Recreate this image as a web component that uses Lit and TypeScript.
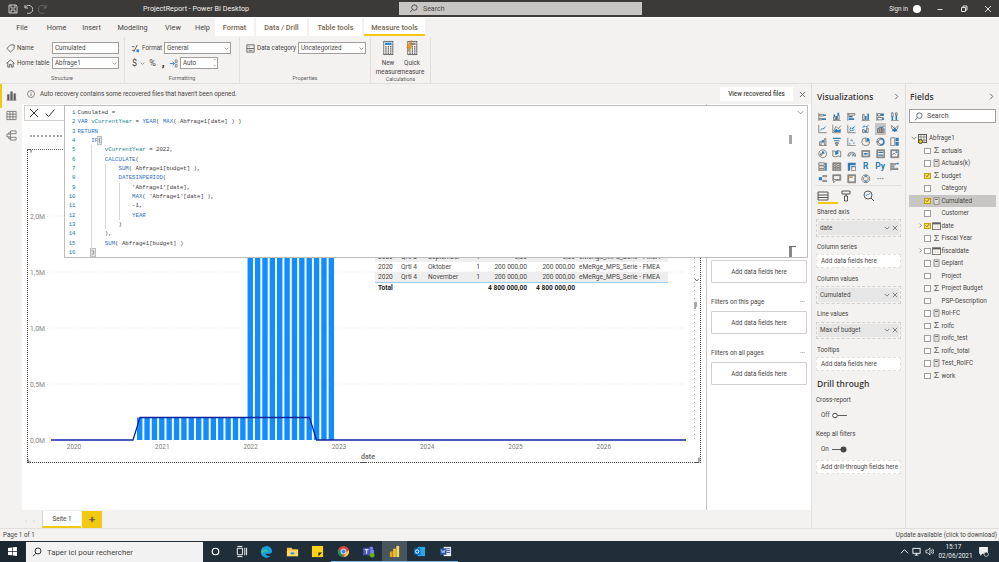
import { LitElement, css, html, svg } from 'lit';
import { customElement } from 'lit/decorators.js';

const CODE = [
  'Cumulated =',
  'VAR vCurrentYear = YEAR( MAX( Abfrage1[date] ) )',
  'RETURN',
  '    IF(',
  '        vCurrentYear = 2022,',
  '        CALCULATE(',
  "            SUM( Abfrage1[budget] ),",
  '            DATESINPERIOD(',
  "                'Abfrage1'[date],",
  "                MAX( 'Abfrage1'[date] ),",
  '                -1,',
  '                YEAR',
  '            )',
  '        ),',
  '        SUM( Abfrage1[budget] )',
  '    )',
];

// which indent guides (in 4-char units) each code line draws
const GUIDES = [0, 0, 0, 0, 1, 1, 2, 2, 3, 3, 3, 3, 2, 1, 1, 1];

const FIELDS: { name: string; icon: string; checked?: boolean; active?: boolean; expand?: boolean }[] = [
  { name: 'actuals', icon: 'sum' },
  { name: 'Actuals(k)', icon: 'calc' },
  { name: 'budget', icon: 'sum', checked: true },
  { name: 'Category', icon: '' },
  { name: 'Cumulated', icon: 'calc', checked: true, active: true },
  { name: 'Customer', icon: '' },
  { name: 'date', icon: 'cal', checked: true, expand: true },
  { name: 'Fiscal Year', icon: 'sum' },
  { name: 'fiscaldate', icon: 'cal', expand: true },
  { name: 'Geplant', icon: 'calc' },
  { name: 'Project', icon: '' },
  { name: 'Project Budget', icon: 'sum' },
  { name: 'PSP-Description', icon: '' },
  { name: 'RoI-FC', icon: 'calc' },
  { name: 'rolfc', icon: 'sum' },
  { name: 'rolfc_test', icon: 'calc' },
  { name: 'rolfc_total', icon: 'sum' },
  { name: 'Test_RoIFC', icon: 'calc' },
  { name: 'work', icon: 'sum' },
];

const ROWS = [
  ['2020', 'Qrtl 3', 'September', '1', '0,00', '0,00', 'eMeRge_MPS_Serie - FMEA'],
  ['2020', 'Qrtl 4', 'Oktober', '1', '200 000,00', '200 000,00', 'eMeRge_MPS_Serie - FMEA'],
  ['2020', 'Qrtl 4', 'November', '1', '200 000,00', '200 000,00', 'eMeRge_MPS_Serie - FMEA'],
];

// [gray path, blue path] on a 12x12 box
const VIZ: [string, string][] = [
  ['M1 1v10M2 3h5v2H2zM2 8h3v2H2z', 'M7 3h3v2H7zM5 8h5v2H5z'],
  ['M1 11h10M2 6h2v4H2zM7 4h2v6H7z', 'M2 3h2v3H2zM7 1h2v3H7zM4.500 5h2v5h-2z'],
  ['M1 1v10M2 2h8v2H2z', 'M2 5h5v2H2zM2 8h7v2H2z'],
  ['M1 11h10M2 3h2v7H2z', 'M5 5h2v5H5zM8 2h2v8H8z'],
  ['M1 1v10M2 2h4v3H2zM2 7h6v3H2z', 'M6 2h4v3H6zM8 7h2v3H8z'],
  ['M1 11h10M2 1h2v5H2zM7 1h2v3H7z', 'M2 6h2v4H2zM7 4h2v6H7z'],
  ['M1 1v10h10', 'M2 9l3-4 2 2 4-5'],
  ['M1 1v10h10M2 9l3-6 3 3 3-4', 'M2 10l3-4 3 2 3-2v4z'],
  ['M1 1v10h10', 'M2 8l3-4 2 3 4-5M2 10l3-3 2 2 4-3'],
  ['M2 7h2v4H2zM7 5h2v6H7z', 'M1 5l3-3 3 2 4-3M4.500 8h2v3h-2z'],
  ['M2 6h2v5H2zM5 4h2v7H5zM8 6h2v5H8z', 'M1 7l3-3 3 2 4-4'],
  ['M2 2l4 4 4-4v3l-4 5-4-5z', 'M2 9l4-5 4 5'],
  ['M1 11h10M2 6h2v4H2zM8 2h2v8H8z', 'M4.500 4h3v3h-3z'],
  ['M4 7h4v1.500H4zM5 9.500h2V11H5z', 'M1 1h10v1.500H1zM2.500 4h7v1.500h-7z'],
  ['M1 1v10h10', 'M3 8h1.500v1.500H3zM6 4h1.500v1.500H6zM8 7h1.500v1.500H8zM4.500 3H6v1.500H4.500z'],
  ['M6 1a5 5 0 1 0 5 5H6z', 'M7 1v4h4a4 4 0 0 0-4-4z'],
  ['M6 1a5 5 0 0 0-5 5h2a3 3 0 0 1 3-3zM1 6a5 5 0 0 0 5 5V9a3 3 0 0 1-3-3z', 'M6 1a5 5 0 0 1 0 10V9a3 3 0 0 0 0-6z'],
  ['M1 1h5v10H1z', 'M7 1h4v4H7zM7 6h4v5H7z'],
  ['M6 1a5 5 0 1 0 .01 0zM3 6h2v2H3z', 'M5 3h3v3H5z'],
  ['M1 2l3 1 4-1 3 1v7l-3-1-4 1-3-1z', 'M4 3l4-1v4l-4 2z'],
  ['M1 9a5 5 0 0 1 10 0H9a3 3 0 0 0-6 0z', 'M6 9l3-4 .8.5L7 9.500z'],
  ['M1 2h10v8H1zM2 3v6h8V3z', 'M3.500 5h5v2h-5z'],
  ['M1 1h10v10H1zM2 2v8h8V2z', 'M3 3.500h6V5H3zM3 7h6v1.500H3z'],
  ['M1 1h10v10H1zM2 2v8h8V2zM3 8l2-3 2 2', 'M7 3h2v2H7z'],
  ['M1 1h7v3H1zM1 5h7v3H1zM1 9h7v2H1z', 'M9 1h2v10H9z'],
  ['M1 1h10v10H1zM2 2v2h3V2zM6 2v2h4V2zM2 5v2h3V5zM6 5v2h4V5zM2 8v2h3V8zM6 8v2h4V8z', ''],
  ['M6 6h5v5H6z', 'M1 1h10v3H1zM1 4h3v7H1zM5 5h6v1H5z'],
  ['', ''],
  ['', ''],
  ['M1 1v10M2 2h5v1.500H2zM2 5h3v1.500H2zM2 8h8v1.500H2z', 'M8 1h3v2H8z'],
  ['M6 2h5v1.500H6zM6 8h5v1.500H6z', 'M1 4h4v4H1z'],
  ['M1 1h10v7H5l-3 3V8H1zM2 2v5h8V2z', ''],
  ['M1 1h10v10H1zM2 2v8h8V2z', 'M3 3h4v2H3z'],
  ['M6 1a5 5 0 1 0 .01 0zM6 3a3 3 0 1 0 .01 0z', 'M4 1.500L6 4 8 1.500M4 10.500L6 8l2 2.500'],
  ['', ''],
];

const vizIcon = (icon: [string, string], index: number) => {
  if (index === 27) return html`<span class="viz-glyph r">R</span>`;
  if (index === 28) return html`<span class="viz-glyph py">Py</span>`;
  if (index === 34) return html`<span class="viz-glyph dots">···</span>`;
  const blue = index === 32 ? '#d9822b' : '#2b7cb8';
  return html`<svg class=${index === 10 ? 'viz selected' : 'viz'} viewBox="0 0 12 12">
    <path d=${icon[0]} fill="none" stroke="#605e5c" stroke-width=".9"></path>
    <path d=${icon[1]} fill=${blue}></path>
  </svg>`;
};

const calculator = (big: boolean, bolt = false) => html`<svg class=${big ? 'calc-big' : 'calc-small'} viewBox="0 0 20 24">
  <rect x="3" y="1" width="15" height="22" fill="#fff" stroke="#605e5c" stroke-width="1.500"></rect>
  <rect x="5" y="3" width="11" height="4" fill=${bolt ? '#8a8886' : '#2b88d8'}></rect>
  ${[9, 12.5, 16, 19.500].map(y => [5.500, 9.500, 13.500].map(x => svg`<rect x=${x} y=${y} width="2.200" height="2.200" fill="#484644"></rect>`))}
  ${bolt ? svg`<path d="M8 0L1 11h4l-3 8 9-11H7l3-8z" fill="#e8a317" stroke="#c55a11" stroke-width=".6"></path>` : ''}
</svg>`;

const fieldIcon = (icon: string) => {
  if (icon === 'sum') return html`<span class="sigma">Σ</span>`;
  if (icon === 'calc') return html`<svg class="ficon" viewBox="0 0 10 10">
    <rect x="1.500" y=".5" width="7" height="9" fill="#fff" stroke="#605e5c"></rect>
    <rect x="3" y="2" width="4" height="1.500" fill="#605e5c"></rect>
    <path d="M3 5h4M3 7h4" stroke="#a19f9d" stroke-width=".8"></path>
  </svg>`;
  if (icon === 'cal') return html`<svg class="ficon wide" viewBox="0 0 11 10">
    <rect x=".5" y="1" width="10" height="8.500" fill="#fff" stroke="#605e5c"></rect>
    <rect x=".5" y="1" width="10" height="2" fill="#605e5c"></rect>
    <path d="M2 5h7M2 7h7" stroke="#a19f9d" stroke-width=".8" stroke-dasharray="1 1"></path>
  </svg>`;
  return html`<span class="ficon"></span>`;
};

const close = html`<svg class="mini" viewBox="0 0 8 8"><path d="M1 1l6 6M7 1L1 7" stroke="#605e5c" fill="none"></path></svg>`;
const chevDown = html`<svg class="mini" viewBox="0 0 8 8"><path d="M1 2.500l3 3 3-3" stroke="#605e5c" fill="none"></path></svg>`;
const chevRight = html`<svg class="mini" viewBox="0 0 8 8"><path d="M2.500 1l3 3-3 3" stroke="#605e5c" fill="none"></path></svg>`;
const magnifier = (color: string) => html`<svg class="magnifier" viewBox="0 0 10 10"><circle cx="6" cy="4" r="3" fill="none" stroke=${color}></circle><path d="M4 6.200L1 9.200" stroke=${color}></path></svg>`;

@customElement('app-root')
export class AppRoot extends LitElement {
  static styles = css`
    :host {
      display: block;
      width: 999px;
      height: 562px;
      overflow: hidden;
      font-family: Roboto, "Open Sans", sans-serif;
      font-size: 6.300px;
      color: #484644;
      background: #f3f2f1;
      white-space: nowrap;
    }
    svg { display: block; flex: none; }
    .app { display: flex; flex-direction: column; height: 562px; }

    /* title bar */
    .title { height: 18px; background: #3b3a39; display: flex; align-items: center; color: #eee; flex: none; border-bottom: 1px solid #fff; box-sizing: border-box; }
    .qa { width: 143px; display: flex; gap: 5px; padding-left: 8px; box-sizing: border-box; }
    .qa svg { width: 10px; height: 10px; }
    .title-text { width: 256px; font-size: 7.200px; }
    .search { width: 243px; height: 13px; background: #c8c6c4; display: flex; align-items: center; gap: 5px; padding-left: 10px; box-sizing: border-box; color: #484644; font-size: 7px; }
    .magnifier { width: 9px; height: 9px; }
    .win { margin-left: auto; display: flex; align-items: center; }
    .sign { margin-right: 5px; }
    .dot { width: 8px; height: 8px; border-radius: 50%; background: #fff; margin-right: 15px; }
    .win svg { width: 8px; height: 8px; margin-right: 16px; }
    .win svg:last-child { margin-right: 7px; }

    /* ribbon */
    .tabs { height: 18px; display: flex; align-items: stretch; flex: none; font-size: 7.300px; padding-left: 5px; }
    .tab { display: flex; align-items: center; justify-content: center; }
    .tab.context { background: #fff; font-weight: 500; color: #75664b; margin-right: 2px; }
    .tab.active { box-shadow: inset 0 -2px 0 #f2c811; }
    .ribbon { height: 47px; display: flex; flex: none; border-bottom: 1px solid #e1dfdd; position: relative; }
    .group { display: flex; flex-direction: column; border-right: 1px solid #e1dfdd; margin: 1px 0 0; box-sizing: border-box; }
    .group-body { flex: 1; display: flex; flex-direction: column; gap: 3px; padding: 5px 0 0 6px; }
    .group-label { text-align: center; font-size: 5.400px; height: 7px; line-height: 7px; color: #605e5c; padding-bottom: 1px; }
    .g-row { display: flex; align-items: center; gap: 2px; height: 12px; }
    .g-row svg { width: 9px; height: 9px; }
    .inp { height: 12px; box-sizing: border-box; background: #fff; border: 1px solid #a19f9d; display: flex; align-items: center; justify-content: space-between; padding: 0 1px 0 2px; }
    .inp svg { width: 5px; height: 5px; }
    .lbl-name { width: 33px; }
    .lbl-format { width: 20px; }
    .lbl-cat { width: 38px; margin-right: 1px; }
    .w67 { width: 67px; }
    .w68 { width: 68px; }
    .w38 { width: 38px; }
    .stepper { font-size: 4px; line-height: 4px; white-space: normal; }
    .calc-big { width: 12px; height: 16px; }
    .calc-small { width: 9px; height: 11px; }
    .measures { display: flex; padding: 3px 0 0 5px; text-align: center; line-height: 8.600px; flex: 1; white-space: normal; }
    .measures div { width: 24px; display: flex; flex-direction: column; align-items: center; gap: 3px; }
    .glyphs { display: flex; align-items: center; font-size: 9px; height: 12px; padding-left: 1px; width: 46px; flex: none; }
    .glyphs span:nth-child(1) { width: 9px; }
    .glyphs .caret { width: 5px; height: 5px; margin-right: 4px; }
    .glyphs span:nth-child(3) { width: 14px; }
    .glyphs span:nth-child(4) { width: 8px; font-weight: 900; font-size: 11px; line-height: 6px; color: #323130; }

    /* main area */
    .main { flex: 1; min-height: 0; display: flex; }
    .rail { width: 22px; flex: none; display: flex; flex-direction: column; align-items: center; gap: 9px; padding-top: 6px; box-sizing: border-box; position: relative; }
    .rail::before { content: ''; position: absolute; left: 0; top: 0; width: 2px; height: 24px; background: #f2c811; }
    .rail svg { width: 11px; height: 11px; }
    .center { width: 789px; flex: none; display: flex; flex-direction: column; position: relative; background: #f3f2f1; }
    .info { height: 20px; flex: none; display: flex; align-items: center; padding-left: 5px; gap: 5px; }
    .info .i { width: 8px; height: 8px; }
    .view-btn { margin-left: auto; background: #fff; width: 73px; height: 14px; display: flex; align-items: center; justify-content: center; font-weight: 500; font-size: 6.300px; }
    .info .x { width: 7px; height: 7px; margin: 0 5px 0 1px; }
    .canvas { flex: 1; display: flex; min-height: 0; background: #fff; }
    .report { width: 684px; flex: none; position: relative; border-right: 1px solid #c8c6c4; }
    .filters { flex: 1; display: flex; flex-direction: column; justify-content: flex-end; padding: 0 4px 125px; }
    .f-label { display: flex; justify-content: space-between; height: 14px; line-height: 10px; margin-top: 14px; padding-right: 2px; }
    .f-box { height: 23px; box-sizing: border-box; border: 1px solid #d2d0ce; border-radius: 1px; display: flex; align-items: center; justify-content: center; }

    .stale { position: absolute; left: 8px; top: 31px; border-top: 2px dotted #a6a6a6; width: 32px; }
    .visual { position: absolute; left: 5px; top: 45px; width: 674px; height: 314px; box-sizing: border-box; border: 1px dotted #444; border-top-color: #666; }
    .visual svg { position: absolute; left: -1px; top: -1px; }
    .chart-table { position: absolute; left: 353px; top: 148px; width: 293px; table-layout: fixed; border-collapse: collapse; font-size: 6.600px; }
    .chart-table td { padding: 0 2px 0 3px; height: 10px; line-height: 10px; overflow: hidden; }
    .chart-table td.num { text-align: right; padding-right: 1px; }
    .chart-table td.qty { text-align: center; }
    .c1 { width: 23px; }
    .c2 { width: 27px; }
    .c3 { width: 45px; }
    .c4 { width: 15px; }
    .c5 { width: 43px; }
    .c6 { width: 48px; }
    .chart-table tr.shade td { background: #eeeeee; }
    .chart-table tr.last td { border-bottom: 1px solid #9fcdf0; }
    .chart-table tr.total td { font-weight: 700; color: #222; overflow: visible; }

    .commit { position: absolute; left: 2px; top: 21px; width: 41px; height: 16px; background: #fff; border: 1px solid #d2d0ce; box-sizing: border-box; display: flex; align-items: center; gap: 6px; padding-left: 4px; z-index: 2; }
    .commit svg { width: 10px; height: 10px; }
    .editor { position: absolute; left: 42px; top: 21px; width: 744px; height: 153px; background: #fff; border: 1px solid #bdbdbd; box-sizing: border-box; z-index: 2; font-family: "Liberation Mono", monospace; font-size: 5.700px; padding-top: 2px; }
    .line { display: flex; height: 9.330px; line-height: 9.330px; white-space: pre; position: relative; color: #3b3a39; }
    .ln { width: 10.500px; text-align: right; color: #237893; flex: none; margin-right: 1px; }
    .code { padding-left: 1px; position: relative; }
    .guide { position: absolute; top: 0; bottom: 0; width: 1px; background: #d8d8d8; }
    .kw { color: #2f6fc4; }
    .var { color: #12888a; }
    .match { background: #e4e4e4; outline: .5px solid #bdbdbd; }
    .sb-thumb { position: absolute; right: 15px; top: 29px; width: 3px; height: 9px; background: #a6a6a6; }
    .sb-end { position: absolute; right: 11px; top: 140px; width: 7px; height: 10px; border-top: 1px solid #666; background: linear-gradient(#888, #888) 0 0 / 3px 100% no-repeat; }
    .sb-chev { position: absolute; right: 3px; top: 3px; width: 7px; height: 7px; }

    .pages { height: 18px; flex: none; display: flex; align-items: flex-end; background: #f3f2f1; padding-left: 3px; }
    .arrows { display: flex; gap: 6px; color: #c8c6c4; font-size: 6px; padding: 0 0 5px 0; width: 17px; box-sizing: border-box; }
    .page { width: 39px; height: 17px; background: #fff; border-bottom: 2px solid #f2c811; box-sizing: border-box; display: flex; align-items: center; justify-content: center; border-left: 1px solid #d2d0ce; }
    .plus { width: 20px; height: 17px; background: #f2c811; color: #605e5c; margin-left: 1px; display: flex; align-items: center; justify-content: center; font-size: 11px; font-weight: 700; line-height: 1; }

    /* side panes */
    .viz-pane { width: 95px; flex: none; border-left: 1px solid #e1dfdd; border-right: 1px solid #e1dfdd; box-sizing: border-box; padding: 0 4px; position: relative; }
    .pane-title { display: flex; align-items: center; justify-content: space-between; height: 26px; box-sizing: border-box; padding: 0 1px 2px; font-family: "Open Sans", sans-serif; font-size: 8.500px; font-weight: 600; color: #3b3a39; }
    .pane-title svg { width: 7px; height: 7px; }
    .viz-grid { display: grid; grid-template-columns: repeat(6, 14.500px); grid-auto-rows: 12.500px; margin: 0 -1px; border-bottom: 1px solid #e1dfdd; align-items: center; justify-items: center; }
    .viz { width: 9.500px; height: 9.500px; }
    .viz.selected { background: #c8c6c4; outline: 1.500px solid #c8c6c4; }
    .viz-glyph { font-weight: 700; color: #2b7cb8; font-size: 8.500px; line-height: 1; }
    .viz-glyph.dots { color: #605e5c; font-size: 8px; }
    .pane-tabs { display: flex; gap: 11px; height: 18px; padding: 4px 1px 0; margin-bottom: -3px; box-sizing: border-box; position: relative; }
    .pane-tabs svg { width: 12px; height: 12px; }
    .pane-tabs::after { content: ''; position: absolute; left: 2px; bottom: 0; width: 20px; height: 2px; background: #f2c811; }
    .w-label { height: 9px; line-height: 9px; margin-top: 6.500px; padding-left: 1px; }
    .well { height: 17.500px; margin-top: 2.500px; border: 1px dashed #d2d0ce; box-sizing: border-box; padding: 1px; }
    .chip { height: 13.500px; background: #e6e6e6; display: flex; align-items: center; padding: 0 1px 0 2px; gap: 2px; }
    .chip span { flex: 1; }
    .chip svg { width: 6px; height: 6px; }
    .add { height: 14px; margin-top: 2px; background: #fff; border: 1px dashed #e1dfdd; box-sizing: border-box; display: flex; align-items: center; padding-left: 4px; }
    .drill { font-family: "Open Sans", sans-serif; font-size: 8.500px; font-weight: 600; color: #3b3a39; margin: 7.500px 0 5.500px 1px; height: 12px; line-height: 12px; }
    .sub { height: 9px; line-height: 9px; margin-bottom: 6px; }
    .toggle { display: flex; align-items: center; gap: 2px; height: 9px; padding-left: 5px; margin-bottom: 10px; }
    .toggle svg { width: 16px; height: 7px; }
    .toggle.on { margin-bottom: 6.500px; }

    .fields-pane { flex: 1; padding: 0 3px; box-sizing: border-box; }
    .fsearch { height: 14px; margin-top: -1px; background: #fff; border: 1px solid #a19f9d; box-sizing: border-box; display: flex; align-items: center; gap: 4px; padding-left: 4px; font-size: 7px; }
    .tree { margin-top: 9px; }
    .root { display: flex; align-items: center; height: 12.500px; padding-left: 2px; gap: 1px; }
    .root .mini { width: 6px; height: 6px; }
    .root-icon { position: relative; width: 9px; height: 9px; flex: none; margin-right: 1px; }
    .root-icon::after { content: ''; position: absolute; left: 0; bottom: -1px; width: 5px; height: 5px; border-radius: 50%; background: #f2c811; border: .5px solid #484644; box-sizing: border-box; }
    .field { display: flex; align-items: center; height: 12.500px; position: relative; }
    .field.active { background: #c8c6c4; }
    .exp { width: 5px; margin: 0 1px 0 9px; height: 5px; flex: none; }
    .exp svg { width: 5px; height: 5px; }
    .box { width: 6.500px; height: 6.500px; border: 1px solid #a19f9d; background: #fff; box-sizing: border-box; margin-right: 1px; flex: none; display: flex; align-items: center; justify-content: center; }
    .box.on { background: #f7d96a; border-color: #c9a400; }
    .box svg { width: 5px; height: 5px; }
    .slot { width: 10px; flex: none; display: flex; justify-content: center; margin-right: 0; }
    .sigma { text-align: center; font-size: 9px; line-height: 1; color: #605e5c; font-family: "Liberation Sans", sans-serif; }
    .ficon { width: 7px; height: 8px; display: block; flex: none; }
    .ficon.wide { width: 9px; }

    /* bottom */
    .status { height: 13px; flex: none; display: flex; align-items: center; justify-content: space-between; padding: 0 2px 0 3px; border-top: 1px solid #e1dfdd; box-sizing: border-box; }
    .taskbar { height: 21px; flex: none; background: #1f2e39; display: flex; align-items: stretch; color: #eee; box-sizing: border-box; }
    .start { width: 25px; margin-right: 1px; display: flex; align-items: center; justify-content: center; background: #1a2630; }
    .start svg { width: 9px; height: 9px; }
    .tsearch { width: 177px; background: #f2f2f2; color: #484644; display: flex; align-items: center; gap: 5px; padding-left: 6px; box-sizing: border-box; font-size: 7.800px; margin-top: 1px; }
    .tsearch .magnifier { width: 10px; height: 10px; }
    .ticons { display: flex; align-items: center; }
    .ticon { width: 25.500px; height: 21px; display: flex; align-items: center; justify-content: center; box-sizing: border-box; }
    .ticon svg { width: 13px; height: 13px; }
    .ticon.run { box-shadow: inset 0 -1px 0 0 #76b9ed; }
    .ticon.sel { background: #48555f; }
    .tray { margin-left: auto; display: flex; align-items: center; gap: 3.500px; padding-right: 10px; }
    .tray svg { width: 9px; height: 9px; }
    .tray .notify { width: 11px; height: 11px; margin-left: 6px; }
    .clock { text-align: center; line-height: 8.500px; font-size: 6.400px; width: 30px; margin-left: 1.500px; }
  `;

  private renderCode(text: string, index: number) {
    const parts = text.split(/(\b(?:VAR|RETURN|IF|YEAR|MAX|CALCULATE|SUM|DATESINPERIOD)\b|vCurrentYear)/);
    // the caret sits on the IF( ... ) pair, so those two brackets are highlighted
    const marked = index === 3 || index === 15;
    return parts.map((part, i) => {
      if (i % 2 === 1) return html`<span class=${part === 'vCurrentYear' ? 'var' : 'kw'}>${part}</span>`;
      if (marked && /[()]$/.test(part)) {
        return html`${part.slice(0, -1)}<span class="match">${part.slice(-1)}</span>`;
      }
      return part;
    });
  }

  private renderEditor() {
    return html`<div class="commit">
      <svg viewBox="0 0 10 10"><path d="M1 1l8 8M9 1L1 9" stroke="#333" fill="none"></path></svg>
      <svg viewBox="0 0 10 10"><path d="M.5 5.500L3.500 8.500 9.500 1.500" stroke="#333" fill="none"></path></svg>
    </div>
    <div class="editor">
      ${CODE.map((line, i) => html`<div class="line">
        <span class="ln">${i + 1}</span>
        <span class="code">${Array.from({ length: GUIDES[i] }, (_, g) => html`<i class="guide" style="left:${14.700 + g * 13.700}px"></i>`)}${this.renderCode(line, i)}</span>
      </div>`)}
      <i class="sb-thumb"></i>
      <i class="sb-end"></i>
      <svg class="sb-chev" viewBox="0 0 8 8"><path d="M1 2.500l3 3 3-3" stroke="#8a8886" fill="none"></path></svg>
    </div>`;
  }

  private renderChart() {
    const ox = 27;
    const oy = 149;
    const bars: number[] = [];
    for (let x = 137; x < 334; x += 7.370) bars.push(x);
    const years = [2020, 2021, 2022, 2023, 2024, 2025, 2026];
    const axis: [string, number][] = [['2,0M', 216], ['1,5M', 272], ['1,0M', 328], ['0,5M', 384], ['0,0M', 440]];
    return html`<div class="visual">
      <svg width="676" height="316" viewBox="${ox} ${oy} 676 316" font-family="Roboto" font-size="6.400">
        ${axis.map(([label, y]) => svg`
          <text x="30" y=${y + 2.500} fill="#8a8886" font-size="6.800">${label}</text>
          ${y < 440 ? svg`<line x1="47" x2="686" y1=${y} y2=${y} stroke="#e6e6e6" stroke-dasharray="1 2"></line>` : ''}
        `)}
        ${bars.map(x => svg`<rect x=${x} y=${x >= 247 ? 248 : 417.500} width="5.400" height=${x >= 247 ? 192 : 22.500} fill="#118dff"></rect>`)}
        <path d="M51 440H133L140 417.500H309.500L316.500 440H686" fill="none" stroke="#12239e" stroke-width="1.300"></path>
        <line x1="51" x2="133" y1="440" y2="440" stroke="#4a5bc0" stroke-width="1.300"></line>
        <line x1="334" x2="686" y1="440" y2="440" stroke="#4a5bc0" stroke-width="1.300"></line>
        ${years.map((year, i) => svg`<text x=${74 + i * 88.300} y="448.500" text-anchor="middle" fill="#7a7a7a">${year}</text>`)}
        <text x="368" y="458.500" text-anchor="middle" fill="#605e5c" font-size="7" font-weight="500">date</text>
        <path d="M361 462.500h6M28 459v3h3M694 462.500h5v-5M696 302v5M28 149.500h3v3" stroke="#555" fill="none"></path>
        <path d="M695 279l1.800 2 1.800-2" stroke="#666" fill="none"></path>
        <rect x="694" y="303" width="2" height="6" fill="#a6a6a6"></rect>
        <line x1="694.500" x2="694.500" y1="258" y2="440" stroke="#bbb" stroke-dasharray="1 3"></line>
      </svg>
    </div>
    <table class="chart-table">
      <colgroup><col class="c1"><col class="c2"><col class="c3"><col class="c4"><col class="c5"><col class="c6"><col></colgroup>
      ${ROWS.map((r, i) => html`<tr class=${i === 2 ? 'shade last' : i === 0 ? 'shade' : ''}>
        <td>${r[0]}</td><td>${r[1]}</td><td>${r[2]}</td><td class="qty">${r[3]}</td><td class="num">${r[4]}</td><td class="num">${r[5]}</td><td>${r[6]}</td>
      </tr>`)}
      <tr class="total"><td>Total</td><td></td><td></td><td></td><td class="num">4 800 000,00</td><td class="num">4 800 000,00</td><td></td></tr>
    </table>`;
  }

  private renderRibbon() {
    const plain = [['File', 34], ['Home', 35], ['Insert', 35], ['Modeling', 47], ['View', 34], ['Help', 25]] as const;
    const context = [['Format', 39], ['Data / Drill', 51], ['Table tools', 53], ['Measure tools', 61]] as const;
    return html`<div class="tabs">
      ${plain.map(([t, w]) => html`<div class="tab" style="width:${w}px">${t}</div>`)}
      ${context.map(([t, w], i) => html`<div class="tab context ${i === 3 ? 'active' : ''}" style="width:${w}px">${t}</div>`)}
    </div>
    <div class="ribbon">
      <div class="group" style="width:125px">
        <div class="group-body">
          <div class="g-row"><svg viewBox="0 0 10 10"><path d="M1 5l4-4h4v4l-4 4z" fill="none" stroke="#605e5c"></path></svg><span class="lbl-name">Name</span><div class="inp w67">Cumulated</div></div>
          <div class="g-row"><svg viewBox="0 0 10 10"><path d="M.5 5L5 1l4.500 4M2 4v5h2V6h2v3h2V4" fill="none" stroke="#605e5c"></path></svg><span class="lbl-name">Home table</span><div class="inp w67">Abfrage1 ${chevDown}</div></div>
        </div>
        <div class="group-label">Structure</div>
      </div>
      <div class="group" style="width:115px">
        <div class="group-body">
          <div class="g-row"><svg viewBox="0 0 10 10"><path d="M1 3h3M1 7h3M7 1L3 9" stroke="#605e5c" fill="none"></path><path d="M6 6h3v3H6z" fill="#2b88d8"></path></svg><span class="lbl-format">Format</span><div class="inp w67">General ${chevDown}</div></div>
          <div class="g-row">
            <div class="glyphs"><span>$</span><svg class="caret" viewBox="0 0 8 8"><path d="M1 2.500l3 3 3-3" stroke="#605e5c" fill="none"></path></svg><span>%</span><span>,</span>
              <svg viewBox="0 0 10 10"><path d="M1 5h5M4 3l2 2-2 2" stroke="#2b88d8" fill="none"></path><path d="M7 1h2v3H7zM7 6h2v3H7z" fill="none" stroke="#605e5c" stroke-width=".7"></path></svg></div>
            <div class="inp w38">Auto <span class="stepper">⌃<br>⌄</span></div>
          </div>
        </div>
        <div class="group-label">Formatting</div>
      </div>
      <div class="group" style="width:131px">
        <div class="group-body">
          <div class="g-row"><svg viewBox="0 0 10 10"><rect x="1" y="1" width="8" height="8" fill="none" stroke="#605e5c"></rect><path d="M1 5h8M3 3h1M3 7h4" stroke="#605e5c"></path></svg><span class="lbl-cat">Data category</span><div class="inp w68">Uncategorized ${chevDown}</div></div>
        </div>
        <div class="group-label">Properties</div>
      </div>
      <div class="group" style="width:60px">
        <div class="measures">
          <div>${calculator(true)}<span>New measure</span></div>
          <div>${calculator(true, true)}<span>Quick measure</span></div>
        </div>
        <div class="group-label">Calculations</div>
      </div>
    </div>`;
  }

  private renderViz() {
    const fieldChip = (name: string) => html`<div class="well"><div class="chip"><span>${name}</span>${chevDown}${close}</div></div>`;
    const add = (t = 'Add data fields here') => html`<div class="add">${t}</div>`;
    return html`<div class="viz-pane">
      <div class="pane-title"><span>Visualizations</span>${chevRight}</div>
      <div class="viz-grid">${VIZ.map((v, i) => vizIcon(v, i))}</div>
      <div class="pane-tabs">
        <svg viewBox="0 0 12 12"><path d="M1 2h10v8H1zM1 5h10M1 7.500h10" fill="none" stroke="#484644" stroke-width=".9"></path></svg>
        <svg viewBox="0 0 12 12"><path d="M2 1h8v3H2zM6 4v2M4.500 6h3v5h-3z" fill="none" stroke="#484644" stroke-width=".9"></path></svg>
        <svg viewBox="0 0 12 12"><circle cx="5" cy="5" r="4" fill="none" stroke="#484644" stroke-width=".9"></circle><path d="M8 8l3 3" stroke="#484644"></path><path d="M3 6l1.500-2 1 1L7 3" stroke="#2b88d8" fill="none" stroke-width=".8"></path></svg>
      </div>
      <div class="w-label">Shared axis</div>${fieldChip('date')}
      <div class="w-label">Column series</div>${add()}
      <div class="w-label">Column values</div>${fieldChip('Cumulated')}
      <div class="w-label">Line values</div>${fieldChip('Max of budget')}
      <div class="w-label">Tooltips</div>${add()}
      <div class="drill">Drill through</div>
      <div class="sub">Cross-report</div>
      <div class="toggle">Off <svg viewBox="0 0 16 7"><path d="M5.500 3.500H15" stroke="#605e5c"></path><circle cx="3" cy="3.500" r="2.300" fill="#fff" stroke="#484644"></circle></svg></div>
      <div class="sub">Keep all filters</div>
      <div class="toggle on">On <svg viewBox="0 0 16 7"><path d="M1 3.500H11" stroke="#605e5c"></path><circle cx="12.500" cy="3.500" r="3" fill="#484644"></circle></svg></div>
      ${add('Add drill-through fields here')}
    </div>`;
  }

  private renderFields() {
    const tick = html`<svg viewBox="0 0 6 6"><path d="M.8 3l1.500 1.500L5.200 1.200" stroke="#7a6200" fill="none"></path></svg>`;
    return html`<div class="fields-pane">
      <div class="pane-title"><span>Fields</span>${chevRight}</div>
      <div class="fsearch">${magnifier('#605e5c')}Search</div>
      <div class="tree">
        <div class="root">${chevDown}
          <span class="root-icon"><svg width="9" height="9" viewBox="0 0 9 9"><rect x=".5" y=".5" width="8" height="8" fill="#fff" stroke="#605e5c"></rect><path d="M.5 3h8M3 .5v8M6 .5v8M.5 6h8" stroke="#605e5c" stroke-width=".7"></path></svg></span>Abfrage1</div>
        ${FIELDS.map(f => html`<div class="field ${f.active ? 'active' : ''}">
          <span class="exp">${f.expand ? chevRight : ''}</span>
          <span class="box ${f.checked ? 'on' : ''}">${f.checked ? tick : ''}</span>
          <span class="slot">${fieldIcon(f.icon)}</span><span>${f.name}</span>
        </div>`)}
      </div>
    </div>`;
  }

  private renderTaskbar() {
    return html`<div class="taskbar">
      <div class="start"><svg viewBox="0 0 10 10"><path d="M0 1.200l4.500-.7v4H0zM5.200.4L10 0v4.500H5.200zM0 5.300h4.500v4L0 8.800zM5.200 5.300H10V10l-4.800-.6z" fill="#fff"></path></svg></div>
      <div class="tsearch">${magnifier('#333')}Taper ici pour rechercher</div>
      <div class="ticons">
        <div class="ticon"><svg viewBox="0 0 14 14"><circle cx="7" cy="7" r="3.500" fill="none" stroke="#fff" stroke-width="1.300"></circle></svg></div>
        <div class="ticon"><svg viewBox="0 0 14 14"><path d="M2.500 3.500h5.500v7H2.500zM10.500 3v8M12.500 3v8M2.500 1.500h5.500M2.500 12.500h5.500" fill="none" stroke="#fff"></path></svg></div>
        <div class="ticon"><svg viewBox="0 0 14 14"><path d="M1 7a6 6 0 0 1 12 0c0 2-2 2.500-4 2.500H6c0 2 2.500 3 5.500 2A6 6 0 0 1 1 7z" fill="#1b9de2"></path><path d="M1 7c2-3 7-3 8 0H6c-2 0-3 1-3 3z" fill="#36c38f"></path></svg></div>
        <div class="ticon"><svg viewBox="0 0 14 14"><path d="M1 3h5l1 1.500h6V12H1z" fill="#f6c344"></path><rect x="1" y="6" width="12" height="6" fill="#ffd868"></rect><rect x="5" y="8" width="4" height="2" fill="#2b88d8"></rect></svg></div>
        <div class="ticon"><svg viewBox="0 0 14 14"><rect x="1" y="1" width="12" height="12" fill="#fcd116"></rect><path d="M8 12l4-4H8z" fill="#222"></path></svg></div>
        <div class="ticon run"><svg viewBox="0 0 14 14"><circle cx="7" cy="7" r="6" fill="#db4437"></circle><path d="M7 13A6 6 0 0 1 1.800 4L5 8.500z" fill="#0f9d58"></path><path d="M12.800 5.500A6 6 0 0 1 7 13L9.500 8.500z" fill="#ffcd40"></path><circle cx="7" cy="7" r="2.700" fill="#4285f4" stroke="#fff" stroke-width=".8"></circle></svg></div>
        <div class="ticon run"><svg viewBox="0 0 14 14"><circle cx="10" cy="3.500" r="2" fill="#7b83eb"></circle><rect x="6" y="5" width="7" height="6" rx="1" fill="#7b83eb"></rect><rect x="1" y="3" width="8" height="8" fill="#4b53bc"></rect><path d="M3 5h4M5 5v4.500" stroke="#fff"></path><circle cx="11" cy="11" r="2.500" fill="#6bb700"></circle></svg></div>
        <div class="ticon run sel"><svg viewBox="0 0 14 14"><rect x="2" y="7" width="3" height="6" fill="#e8a317"></rect><rect x="5.500" y="4" width="3" height="9" fill="#f2c811"></rect><rect x="9" y="1" width="3" height="12" fill="#f7d96a"></rect></svg></div>
        <div class="ticon run"><svg viewBox="0 0 14 14"><rect x="5" y="2" width="8" height="10" fill="#28a8ea"></rect><rect x="1" y="3.500" width="7" height="7" fill="#0f6cbd"></rect><circle cx="4.500" cy="7" r="1.800" fill="none" stroke="#fff"></circle></svg></div>
        <div class="ticon run"><svg viewBox="0 0 14 14"><rect x="5" y="2" width="8" height="10" fill="#e8eef7"></rect><path d="M8 4h4M8 6h4M8 8h4" stroke="#2b579a"></path><rect x="1" y="3.500" width="7" height="7" fill="#2b579a"></rect><path d="M2.500 5l1 3.500 1-2.500 1 2.500 1-3.500" stroke="#fff" stroke-width=".6" fill="none"></path></svg></div>
      </div>
      <div class="tray">
        <svg viewBox="0 0 10 10"><path d="M1 7l4-4 4 4" stroke="#fff" fill="none"></path></svg>
        <svg viewBox="0 0 10 10"><rect x="1" y="1.500" width="8" height="5.500" fill="none" stroke="#fff"></rect><path d="M5 7v2M3 9h4" stroke="#fff"></path></svg>
        <svg viewBox="0 0 10 10"><path d="M1 3.500h2L5.500 1v8L3 6.500H1zM7 3a3 3 0 0 1 0 4M8.500 2a4.500 4.500 0 0 1 0 6" stroke="#fff" stroke-width=".8" fill="none"></path></svg>
        <div class="clock">15:17<br>02/06/2021</div>
        <svg class="notify" viewBox="0 0 10 10"><path d="M1 1h8v6H4L2 9V7H1z" fill="#eee"></path><circle cx="7.500" cy="7.500" r="2" fill="#1f2e39" stroke="#eee" stroke-width=".6"></circle></svg>
      </div>
    </div>`;
  }

  render() {
    const addBox = html`<div class="f-box">Add data fields here</div>`;
    return html`<div class="app">
      <div class="title">
        <div class="qa">
          <svg viewBox="0 0 10 10"><path d="M1 1h7l1 1v7H1zM3 1v3h4V1M3 9V6h4v3" fill="none" stroke="#c8c6c4"></path></svg>
          <svg viewBox="0 0 10 10"><path d="M2 1v3h3M2 4a4 4 0 1 1 2 5" fill="none" stroke="#c8c6c4"></path></svg>
          <svg viewBox="0 0 10 10"><path d="M8 1v3H5M8 4a4 4 0 1 0-2 5" fill="none" stroke="#6b6a69"></path></svg>
        </div>
        <div class="title-text">ProjectReport - Power BI Desktop</div>
        <div class="search">${magnifier('#484644')}Search</div>
        <div class="win">
          <span class="sign">Sign in</span><i class="dot"></i>
          <svg viewBox="0 0 8 8"><path d="M1.500 4.500h5" stroke="#ddd"></path></svg>
          <svg viewBox="0 0 8 8"><path d="M1.500 2.500h4v4h-4zM3 2.500V1h4v4H5.500" fill="none" stroke="#ddd"></path></svg>
          <svg viewBox="0 0 8 8"><path d="M1 1l6 6M7 1L1 7" stroke="#ddd" fill="none"></path></svg>
        </div>
      </div>
      ${this.renderRibbon()}
      <div class="main">
        <div class="rail">
          <svg viewBox="0 0 12 12"><path d="M1.500 11V5h2v6zM5 11V2h2v9zM8.500 11V4h2v7zM.5 11.500h11" fill="#605e5c" stroke="#605e5c" stroke-width=".5"></path></svg>
          <svg viewBox="0 0 12 12"><path d="M1 1.500h10v9H1zM1 4.500h10M1 7.500h10M4.300 1.500v9M7.600 1.500v9" fill="none" stroke="#605e5c" stroke-width=".8"></path></svg>
          <svg viewBox="0 0 12 12"><path d="M5 1h6v3H5zM1 4.500h4v3H1zM5 8h6v3H5zM3 4.500V3h2M3 7.500V9.500h2" fill="none" stroke="#605e5c" stroke-width=".8"></path></svg>
        </div>
        <div class="center">
          <div class="info">
            <svg class="i" viewBox="0 0 8 8"><circle cx="4" cy="4" r="3.500" fill="none" stroke="#605e5c" stroke-width=".7"></circle><path d="M4 3.500V6M4 2v.8" stroke="#605e5c" stroke-width=".8"></path></svg>
            <span>Auto recovery contains some recovered files that haven't been opened.</span>
            <div class="view-btn">View recovered files</div>
            <svg class="x" viewBox="0 0 8 8"><path d="M1 1l6 6M7 1L1 7" stroke="#605e5c" fill="none"></path></svg>
          </div>
          ${this.renderEditor()}
          <div class="canvas">
            <div class="report">
              <i class="stale"></i>
              ${this.renderChart()}
            </div>
            <div class="filters">
              ${addBox}
              <div class="f-label"><span>Filters on this page</span><span>···</span></div>
              ${addBox}
              <div class="f-label"><span>Filters on all pages</span><span>···</span></div>
              ${addBox}
            </div>
          </div>
          <div class="pages">
            <div class="arrows"><span>‹</span><span>›</span></div>
            <div class="page">Seite 1</div>
            <div class="plus">+</div>
          </div>
        </div>
        ${this.renderViz()}
        ${this.renderFields()}
      </div>
      <div class="status"><span>Page 1 of 1</span><span>Update available (click to download)</span></div>
      ${this.renderTaskbar()}
    </div>`;
  }
}
